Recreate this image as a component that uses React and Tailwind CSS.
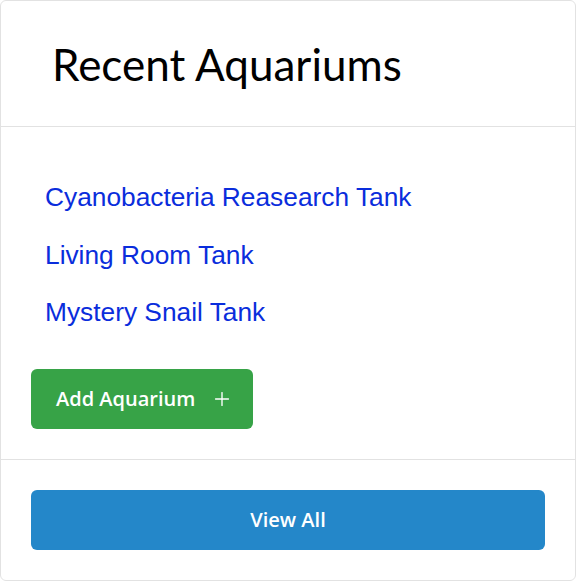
import { Plus } from 'lucide-react';

const tanks = ['Cyanobacteria Reasearch Tank', 'Living Room Tank', 'Mystery Snail Tank'];

export default function App() {
  return (
    <div className="h-[581px] w-[576px] bg-white">
      <div className="flex h-full flex-col rounded-md border border-[#e2e2e2] bg-white">
        <div className="flex h-[126px] items-center border-b border-[#e2e2e2] pl-[51px]">
          <h1 className="text-[44px] leading-none text-black [font-family:Lato,sans-serif]">Recent Aquariums</h1>
        </div>

        <div className="border-b border-[#e2e2e2] px-[30px] pt-[42px] pb-[30px]">
          <ul className="pl-[14px]">
            {tanks.map((t) => (
              <li key={t} className="flex h-[57.5px] items-center">
                <a href="#" className="text-[26.3px] text-[#0a2ddc] [font-family:'Liberation_Sans',Arial,sans-serif]">
                  {t}
                </a>
              </li>
            ))}
          </ul>
          <button className="mt-[27px] flex h-[60px] items-center gap-[16px] rounded-md bg-[#37a347] pl-[25px] pr-[20px] text-[20px] font-semibold text-white [font-family:'Open_Sans',sans-serif]">
            Add Aquarium
            <Plus size={22} strokeWidth={1.5} />
          </button>
        </div>

        <div className="px-[30px] pt-[30px]">
          <button className="flex h-[60px] w-full items-center justify-center rounded-md bg-[#2487c9] text-[20px] font-semibold text-white [font-family:'Open_Sans',sans-serif]">
            View All
          </button>
        </div>
      </div>
    </div>
  );
}
